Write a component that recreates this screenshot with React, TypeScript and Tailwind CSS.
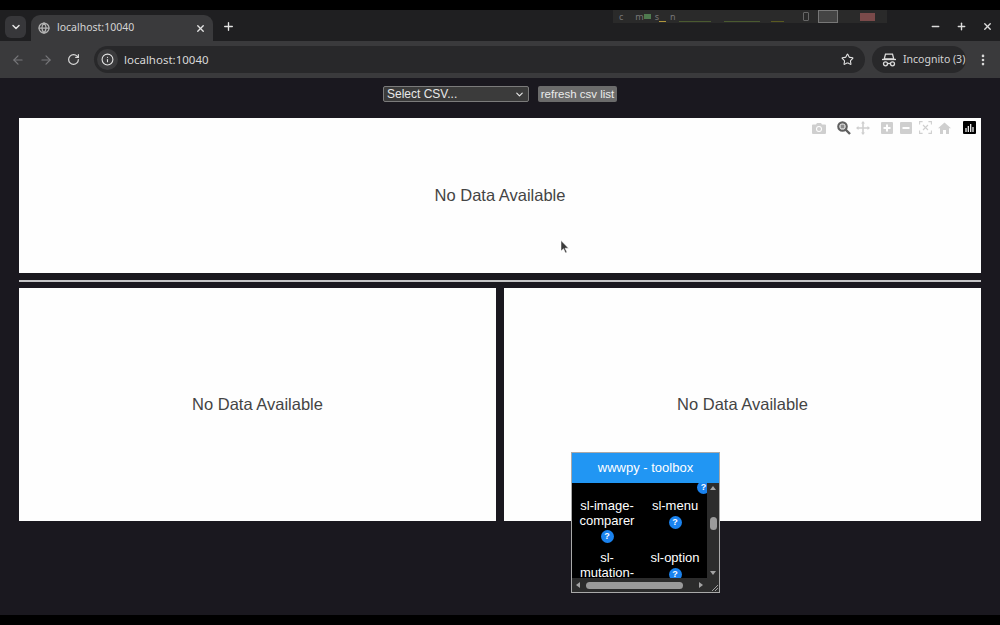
import { ChevronDown, Globe, X, Plus, Minus, ArrowLeft, ArrowRight, RotateCw, Info, Star, EllipsisVertical, ChevronUp } from 'lucide-react';

const sans = 'font-["Noto_Sans","Open_Sans",sans-serif]';
const page = 'font-["Liberation_Sans",Arial,sans-serif]';

function ChartPanel({ className, modebar }: { className: string; modebar?: boolean }) {
  return (
    <div className={`relative flex items-center justify-center bg-[#fefefe] ${className}`}>
      <span className={`${page} text-[16.5px] text-[#444]`}>No Data Available</span>
      {modebar && <Modebar />}
    </div>
  );
}

function Modebar() {
  const grey = '#cfcfcf';
  return (
    <div className="absolute right-[5px] top-[3px] flex h-[13px] items-center">
      {/* camera */}
      <svg width="14" height="12" viewBox="0 0 14 12" className="mr-[11px]">
        <path d="M1 2.5h3L5 1h4l1 1.5h3a1 1 0 0 1 1 1V11a1 1 0 0 1-1 1H1a1 1 0 0 1-1-1V3.500a1 1 0 0 1 1-1z" fill={grey} />
        <circle cx="7" cy="7" r="3" fill="#fefefe" />
        <circle cx="7" cy="7" r="2" fill={grey} />
      </svg>
      {/* zoom, active */}
      <svg width="14" height="14" viewBox="0 0 14 14" className="mr-[5px]">
        <circle cx="5.500" cy="5.500" r="4.200" fill="none" stroke="#5f5f5f" strokeWidth="2.200" />
        <rect x="3.500" y="3.500" width="4" height="4" fill="#8a8a8a" />
        <path d="M8.500 8.500L13 13" stroke="#5f5f5f" strokeWidth="2.400" />
      </svg>
      {/* pan */}
      <svg width="14" height="14" viewBox="0 0 14 14" className="mr-[11px]">
        <path d="M7 0l2 2.500H7.800v3.700h3.700V5L14 7l-2.500 2V7.800H7.800v3.700H9L7 14l-2-2.500h1.200V7.800H2.500V9L0 7l2.500-2v1.200h3.700V2.500H5z" fill={grey} />
      </svg>
      {/* zoom in */}
      <svg width="12" height="12" viewBox="0 0 12 12" className="mr-[7px]">
        <path d="M1 0h10a1 1 0 0 1 1 1v10a1 1 0 0 1-1 1H1a1 1 0 0 1-1-1V1a1 1 0 0 1 1-1zm4 2.500V5H2.500v2H5v2.500h2V7h2.500V5H7V2.500z" fill={grey} fillRule="evenodd" />
      </svg>
      {/* zoom out */}
      <svg width="12" height="12" viewBox="0 0 12 12" className="mr-[7px]">
        <path d="M1 0h10a1 1 0 0 1 1 1v10a1 1 0 0 1-1 1H1a1 1 0 0 1-1-1V1a1 1 0 0 1 1-1zm1.500 5v2h7V5z" fill={grey} fillRule="evenodd" />
      </svg>
      {/* autoscale */}
      <svg width="13" height="13" viewBox="0 0 13 13" className="mr-[6px]" fill="none" stroke={grey} strokeWidth="1.100">
        <path d="M.6 3.500V.6h3M9.400.6h3v2.900M12.400 9.500v2.900h-3M3.600 12.400h-3V9.500" />
        <path d="M4 4l5 5M9 4l-5 5" />
      </svg>
      {/* home */}
      <svg width="13" height="12" viewBox="0 0 13 12" className="mr-[12px]">
        <path d="M6.500 0.500L13 6.300h-2V12H8V8H5v4H2V6.300H0z" fill={grey} />
      </svg>
      {/* plotly logo */}
      <svg width="13" height="13" viewBox="0 0 13 13">
        <rect width="13" height="13" rx="1" fill="#000" />
        <path d="M3 7v4M5.300 5v6M7.700 3v8M10 6v5" stroke="#fff" strokeWidth="1.200" />
      </svg>
    </div>
  );
}

function ToolItem({ lines, help = true }: { lines: string[]; help?: boolean }) {
  return (
    <div className="flex flex-col items-center text-center leading-[14.5px]">
      {lines.map(l => <span key={l}>{l}</span>)}
      {help && <Help />}
    </div>
  );
}

function Help() {
  return (
    <span className="mt-[2px] flex h-[13px] w-[13px] items-center justify-center rounded-full bg-[#1a82ee] text-[9px] font-bold leading-none text-white">?</span>
  );
}

function Toolbox() {
  return (
    <div className={`${page} absolute left-[571px] top-[452px] h-[141px] w-[149px] border border-[#a9a9a9] bg-black`}>
      <div className="flex h-[30px] items-center justify-center bg-[#2196f3] text-[13px] text-white">wwwpy - toolbox</div>
      <div className="relative h-[109px] overflow-hidden">
        <div className="absolute right-[9px] top-[-4px]"><Help /></div>
        <div className="grid grid-cols-[68px_68px] pl-[1px] pt-[16px] text-[13px] text-white">
          <ToolItem lines={['sl-image-', 'comparer']} />
          <ToolItem lines={['sl-menu']} />
          <div className="col-span-2 h-[8px]" />
          <ToolItem lines={['sl-', 'mutation-']} help={false} />
          <ToolItem lines={['sl-option']} />
        </div>
        {/* vertical scrollbar */}
        <div className="absolute bottom-[14px] right-0 top-0 flex w-[12px] flex-col items-center justify-between bg-[#2c2c2c] py-[3px]">
          <span className="h-0 w-0 border-x-[3.500px] border-b-[4px] border-x-transparent border-b-[#a3a3a3]" />
          <span className="absolute top-[34px] h-[13px] w-[7px] rounded-full bg-[#9a9a9a]" />
          <span className="h-0 w-0 border-x-[3.500px] border-t-[4px] border-x-transparent border-t-[#a3a3a3]" />
        </div>
        {/* horizontal scrollbar */}
        <div className="absolute bottom-0 left-0 right-0 flex h-[14px] items-center justify-between bg-[#2c2c2c] pl-[4px] pr-[16px]">
          <span className="h-0 w-0 border-y-[3.500px] border-r-[4px] border-y-transparent border-r-[#a3a3a3]" />
          <span className="absolute left-[14px] h-[7px] w-[97px] rounded-full bg-[#9a9a9a]" />
          <span className="h-0 w-0 border-y-[3.500px] border-l-[4px] border-y-transparent border-l-[#a3a3a3]" />
        </div>
      </div>
      <svg width="6" height="6" viewBox="0 0 6 6" className="absolute bottom-[1px] right-[1px]">
        <path d="M0 6L6 0M3 6L6 3" stroke="#bdbdbd" strokeWidth="0.800" />
      </svg>
    </div>
  );
}

function SystemBar() {
  return (
    <div className={`${sans} absolute left-[613px] top-[10px] flex h-[13px] w-[274px] items-center bg-[#2a2a2a] text-[9px] leading-none text-[#777]`}>
      <span className="ml-[6px]">c</span>
      <span className="ml-[12px]">m</span>
      <span className="h-[5px] w-[7px] bg-[#4f7a4f]" />
      <span className="ml-[4px]">s</span>
      <span className="mt-[9px] h-[1px] w-[7px] bg-[#b0963c]" />
      <span className="ml-[4px]">n</span>
      <span className="ml-[3px] mt-[10px] h-[1px] w-[32px] bg-[#4a5a30]" />
      <span className="ml-[13px] mt-[10px] h-[1px] w-[36px] bg-[#4a5a30]" />
      <span className="ml-[11px] mt-[10px] h-[1px] w-[13px] bg-[#5a5a20]" />
      <span className="ml-[19px] h-[9px] w-[6px] rounded-[1px] border border-[#666]" />
      <span className="ml-[9px] h-[13px] w-[20px] border border-[#777] bg-[#444]" />
      <span className="ml-[22px] h-[8px] w-[15px] bg-[#7a4a4a]" />
    </div>
  );
}

function IncognitoIcon() {
  return (
    <svg width="16" height="14" viewBox="0 0 16 14" fill="none" stroke="#dcdcdc" strokeWidth="1.300">
      <path d="M4.500 1.200h7L12.800 6H3.200z" />
      <path d="M1 6.500h14" />
      <circle cx="4.500" cy="10.800" r="2" />
      <circle cx="11.500" cy="10.800" r="2" />
      <path d="M6.500 10.500h3" />
    </svg>
  );
}

export default function App() {
  return (
    <div className="relative flex h-[625px] w-[1000px] flex-col overflow-hidden bg-black">
      <div className="h-[10px] bg-black" />
      <div className={`${sans} flex h-[31px] items-end bg-[#1f1f21] pl-[5px]`}>
        <button className="mb-[3px] mr-[5px] flex h-[22px] w-[21px] items-center justify-center rounded-[6px] bg-[#37373a] text-[#e3e3e3]">
          <ChevronDown size={12} strokeWidth={3} />
        </button>
        <div className="flex h-[26px] w-[182px] items-center rounded-t-[9px] bg-[#3a3a3c] pl-[7px] pr-[7px] text-[#d4d4d4]">
          <Globe size={12} className="text-[#b5b5b5]" strokeWidth={2.500} />
          <span className="ml-[7px] flex-1 text-[10.500px]">localhost:10040</span>
          <X size={11} strokeWidth={3} className="text-[#e3e3e3]" />
        </div>
        <Plus size={13} strokeWidth={2.500} className="mb-[8px] ml-[9px] text-[#e3e3e3]" />
        <div className="mb-[9px] ml-auto flex items-center gap-[15px] pr-[7px] text-[#dcdcdc]">
          <Minus size={11} strokeWidth={3} />
          <Plus size={11} strokeWidth={3} />
          <X size={11} strokeWidth={3} />
        </div>
      </div>
      <div className={`${sans} flex h-[37px] items-center bg-[#3a3a3c] pl-[11px] pr-[8px]`}>
        <ArrowLeft size={14} className="text-[#77777a]" />
        <ArrowRight size={14} className="ml-[14px] text-[#77777a]" />
        <RotateCw size={13} strokeWidth={2.200} className="ml-[14px] text-[#dadada]" />
        <div className="ml-[14px] flex h-[27px] w-[771px] items-center rounded-full bg-[#28282a] pl-[3px] pr-[11px]">
          <span className="flex h-[21px] w-[21px] items-center justify-center rounded-full bg-[#3b3b3d]">
            <Info size={13} className="text-[#e3e3e3]" />
          </span>
          <span className="ml-[6px] flex-1 text-[11.500px] text-[#d8d8d8]">localhost:10040</span>
          <Star size={13} strokeWidth={2} className="text-[#e3e3e3]" />
        </div>
        <div className="ml-[7px] flex h-[27px] w-[94px] items-center rounded-full bg-[#28282a] pl-[9px] text-[10.500px] text-[#d4d4d4]">
          <IncognitoIcon />
          <span className="ml-[6px]">Incognito (3)</span>
        </div>
        <EllipsisVertical size={14} strokeWidth={2.500} className="ml-[10px] text-[#dadada]" />
      </div>

      <div className={`${page} flex h-[537px] flex-col bg-[#1a181f] px-[19px]`}>
        <div className="mt-[8px] flex h-[16px] items-center justify-center gap-[9px]">
          <div className="flex h-[16px] w-[146px] items-center justify-between rounded-[2px] border border-[#7b7b7b] bg-[#3b3b3b] pl-[3px] pr-[3px] text-[12px] text-[#e8e8e8]">
            <span>Select CSV...</span>
            <ChevronDown size={11} strokeWidth={2.500} />
          </div>
          <button className="h-[16px] w-[79px] rounded-[2px] bg-[#6b6b6b] text-center text-[11.500px] leading-[16px] text-[#ececec]">refresh csv list</button>
        </div>
        <ChartPanel className="mt-[16px] h-[155px]" modebar />
        <div className="mt-[7px] h-[2px] bg-[#c4c4c6]" />
        <div className="mt-[6px] flex h-[233px] gap-[8px]">
          <ChartPanel className="flex-1" />
          <ChartPanel className="flex-1" />
        </div>
      </div>
      <div className="h-[10px] bg-black" />

      <SystemBar />
      <Toolbox />
      {/* mouse pointer */}
      <svg width="9" height="13" viewBox="0 0 9 13" className="absolute left-[560px] top-[240px]">
        <path d="M1 0.500V11l2.500-2.300L5.500 13 7 12.300 5 8.200h3.500z" fill="#3a3a3a" stroke="#fff" strokeWidth="0.500" />
      </svg>
    </div>
  );
}
